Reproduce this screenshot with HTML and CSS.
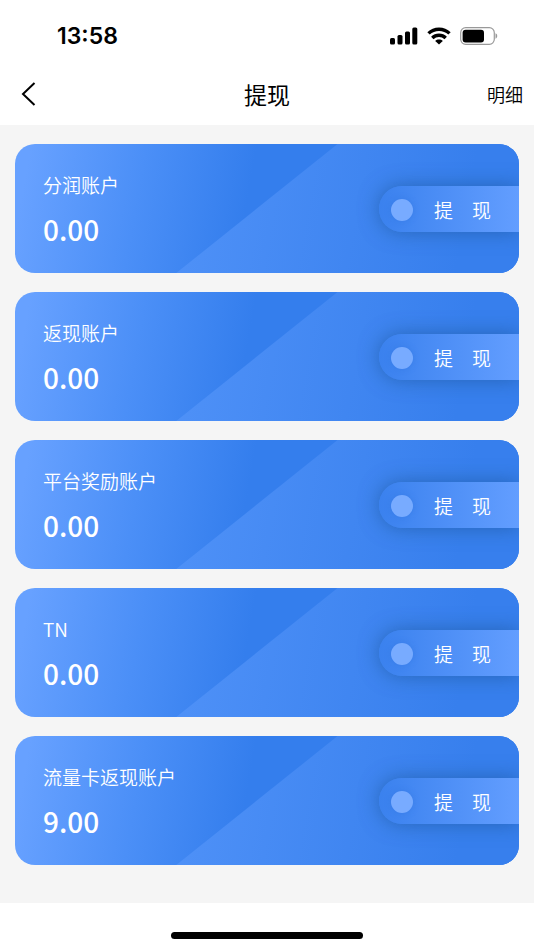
FILE: index.html
```html
<!DOCTYPE html>
<html lang="zh-CN">

<head>
    <meta charset="UTF-8">
    <meta name="viewport" content="width=device-width, initial-scale=1.0">
    <title>提现</title>
    <link rel="stylesheet" href="styles.css">
</head>

<body>
    <div class="status_bar">
        <span class="time">13:58</span>
        <div class="status_icons">
            <svg width="28" height="18" viewBox="0 0 28 18">
                <rect x="0" y="11" width="5" height="6.5" rx="1.5" />
                <rect x="7.5" y="8" width="5" height="9.5" rx="1.5" />
                <rect x="15" y="4.5" width="5" height="13" rx="1.5" />
                <rect x="22.3" y="0.5" width="5" height="17" rx="1.5" />
            </svg>
            <svg width="24" height="18" viewBox="0 0 24 18">
                <g fill="none" stroke="#000" stroke-width="3.4">
                    <path d="M1.5 6.4 C7.3 0.8 16.7 0.8 22.5 6.4" />
                    <path d="M5.3 11 C9 7.3 15 7.3 18.7 11" />
                </g>
                <path d="M8.2 13.9 C10.2 12 13.8 12 15.8 13.9 L12 17.6 Z" />
            </svg>
            <svg width="38" height="18" viewBox="0 0 38 18">
                <rect x="0.7" y="0.7" width="33.6" height="16.6" rx="5" fill="none" stroke="#999" stroke-width="1.2" />
                <rect x="2.6" y="2.8" width="21.4" height="12.6" rx="3" />
                <path d="M35.5 6.3 C37.8 7 37.8 11 35.5 11.7 Z" fill="#999" />
            </svg>
        </div>
    </div>

    <header class="nav_bar">
        <button class="back_btn" type="button" aria-label="返回">
            <svg width="16" height="24" viewBox="0 0 16 24">
                <path d="M13.5 1 L2 12 L13.5 23" fill="none" stroke="#000" stroke-width="2" />
            </svg>
        </button>
        <h1>提现</h1>
        <a class="detail_link" href="#">明细</a>
    </header>

    <main class="account_list">
        <section class="card">
            <div class="account">
                <h2>分润账户</h2>
                <p class="amount">0.00</p>
            </div>
            <button class="withdraw_btn" type="button">提&emsp;现</button>
        </section>

        <section class="card">
            <div class="account">
                <h2>返现账户</h2>
                <p class="amount">0.00</p>
            </div>
            <button class="withdraw_btn" type="button">提&emsp;现</button>
        </section>

        <section class="card">
            <div class="account">
                <h2>平台奖励账户</h2>
                <p class="amount">0.00</p>
            </div>
            <button class="withdraw_btn" type="button">提&emsp;现</button>
        </section>

        <section class="card">
            <div class="account">
                <h2>TN</h2>
                <p class="amount">0.00</p>
            </div>
            <button class="withdraw_btn" type="button">提&emsp;现</button>
        </section>

        <section class="card">
            <div class="account">
                <h2>流量卡返现账户</h2>
                <p class="amount">9.00</p>
            </div>
            <button class="withdraw_btn" type="button">提&emsp;现</button>
        </section>
    </main>

    <footer class="home_area">
        <div class="home_indicator"></div>
    </footer>
</body>

</html>
```
FILE: styles.css
```css
* {
    margin: 0;
    padding: 0;
    box-sizing: border-box;
}

body {
    min-height: 100vh;
    display: flex;
    flex-direction: column;
    background: white;
    color: black;
    font-family: "Noto Sans CJK SC", sans-serif;
}

button {
    border: none;
    background: none;
    font-family: inherit;
    cursor: pointer;
}

/* status bar */
.status_bar {
    height: 65px;
    padding: 6px 36px 0 57px;
    display: flex;
    justify-content: space-between;
    align-items: center;
}

.time {
    font-family: Inter, sans-serif;
    font-size: 23px;
    font-weight: 600;
}

.status_icons {
    display: flex;
    gap: 9px;
}

/* title bar */
.nav_bar {
    height: 60px;
    padding: 0 11px 2px;
    display: grid;
    grid-template-columns: 1fr auto 1fr;
    align-items: center;
}

.back_btn {
    justify-self: start;
    padding: 0 10px;
    display: flex;
}

h1 {
    font-size: 23px;
    font-weight: 400;
    line-height: 32px;
}

.detail_link {
    justify-self: end;
    color: black;
    font-size: 18px;
    font-weight: 350;
    text-decoration: none;
}

/* cards */
.account_list {
    flex: 1;
    padding: 19px 15px;
    display: flex;
    flex-direction: column;
    gap: 19px;
    background: #f5f5f5;
}

.card {
    position: relative;
    height: 129px;
    padding-left: 28px;
    display: flex;
    justify-content: space-between;
    align-items: center;
    border-radius: 20px;
    overflow: hidden;
    background: linear-gradient(100deg, #67a1ff 3%, #4b8ff7 25%, #347eed 46%);
    color: white;
}

/* lighter slanted half of the card */
.card::before {
    content: "";
    position: absolute;
    inset: 0;
    background: linear-gradient(100deg, #5092f8 30%, #377fed 88%);
    clip-path: polygon(64% 0, 100% 0, 100% 100%, 32% 100%);
}

.account,
.withdraw_btn {
    position: relative;
}

h2 {
    font-size: 19px;
    font-weight: 350;
    line-height: 28px;
}

.amount {
    margin-top: 12px;
    font-size: 28px;
    font-weight: 500;
    line-height: 36px;
}

.withdraw_btn {
    width: 140px;
    height: 46px;
    padding: 2px 0 0 12px;
    display: flex;
    align-items: center;
    gap: 21px;
    border-radius: 23px 0 0 23px;
    background: linear-gradient(to right, #3a81ee, #639eff);
    box-shadow: 0 0 20px rgba(30, 90, 160, 0.7);
    color: white;
    font-size: 19px;
    font-weight: 350;
}

.withdraw_btn::before {
    content: "";
    width: 22px;
    height: 22px;
    border-radius: 50%;
    background: #78abff;
    box-shadow: 0 0 6px rgba(40, 110, 220, 0.4);
}

/* home indicator */
.home_area {
    height: 47px;
    padding-top: 29px;
}

.home_indicator {
    width: 36%;
    height: 7px;
    margin: 0 auto;
    border-radius: 4px;
    background: black;
}
```
